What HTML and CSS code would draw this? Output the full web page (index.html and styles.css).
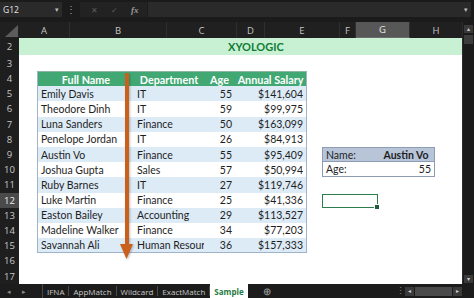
FILE: index.html
```html
<!DOCTYPE html>
<html lang="en">
  <head>
    <meta charset="UTF-8" />
    <title>XYOLOGIC - Sample</title>
    <link rel="stylesheet" href="styles.css">
  </head>
  <body>
    <div class="formula-bar">
      <div class="name-box"><span>G12</span><span class="caret">&#9662;</span></div>
      <div class="dots">&#8942;</div>
      <div class="fx-buttons">
        <span class="icon">&#10005;</span>
        <span class="icon">&#10003;</span>
        <span class="fx">fx</span>
      </div>
      <div class="formula-input"><span class="caret">&#9662;</span></div>
    </div>

    <div class="grid-area">
      <div class="sheet-col">
        <div class="col-headers">
          <div class="corner">
            <svg width="13" height="12" viewBox="0 0 13 12"><polygon points="13,0 13,12 0,12" fill="#5c5c5c" /></svg>
          </div>
          <div class="col w-a">A</div>
          <div class="col w-b">B</div>
          <div class="col w-c">C</div>
          <div class="col w-d">D</div>
          <div class="col w-e">E</div>
          <div class="col w-f">F</div>
          <div class="col w-g active">G</div>
          <div class="col w-h">H</div>
        </div>

        <div class="sheet">
          <div class="row row-2">
            <div class="rh">2</div>
            <div class="band">XYOLOGIC</div>
          </div>
          <div class="row row-3"><div class="rh">3</div></div>

          <div class="row">
            <div class="rh">4</div><div></div>
            <div class="th tl">Full Name</div>
            <div class="th">Department</div>
            <div class="th">Age</div>
            <div class="th tr">Annual Salary</div>
          </div>
          <div class="row">
            <div class="rh">5</div><div></div>
            <div class="td tl alt">Emily Davis</div>
            <div class="td alt">IT</div>
            <div class="td num alt">55</div>
            <div class="td num tr alt">$141,604</div>
          </div>
          <div class="row">
            <div class="rh">6</div><div></div>
            <div class="td tl">Theodore Dinh</div>
            <div class="td">IT</div>
            <div class="td num">59</div>
            <div class="td num tr">$99,975</div>
          </div>
          <div class="row">
            <div class="rh">7</div><div></div>
            <div class="td tl alt">Luna Sanders</div>
            <div class="td alt">Finance</div>
            <div class="td num alt">50</div>
            <div class="td num tr alt">$163,099</div>
          </div>
          <div class="row">
            <div class="rh">8</div><div></div>
            <div class="td tl">Penelope Jordan</div>
            <div class="td">IT</div>
            <div class="td num">26</div>
            <div class="td num tr">$84,913</div>
          </div>
          <div class="row">
            <div class="rh">9</div><div></div>
            <div class="td tl alt">Austin Vo</div>
            <div class="td alt">Finance</div>
            <div class="td num alt">55</div>
            <div class="td num tr alt">$95,409</div>
            <div></div>
            <div class="lk lk-head lk-left">Name:</div>
            <div class="lk lk-head lk-right lk-value">Austin Vo</div>
          </div>
          <div class="row">
            <div class="rh">10</div><div></div>
            <div class="td tl">Joshua Gupta</div>
            <div class="td">Sales</div>
            <div class="td num">57</div>
            <div class="td num tr">$50,994</div>
            <div></div>
            <div class="lk lk-left">Age:</div>
            <div class="lk lk-right num">55</div>
          </div>
          <div class="row">
            <div class="rh">11</div><div></div>
            <div class="td tl alt">Ruby Barnes</div>
            <div class="td alt">IT</div>
            <div class="td num alt">27</div>
            <div class="td num tr alt">$119,746</div>
          </div>
          <div class="row">
            <div class="rh current">12</div><div></div>
            <div class="td tl">Luke Martin</div>
            <div class="td">Finance</div>
            <div class="td num">25</div>
            <div class="td num tr">$41,336</div>
            <div></div>
            <div class="selected"><span class="handle"></span></div>
          </div>
          <div class="row">
            <div class="rh">13</div><div></div>
            <div class="td tl alt">Easton Bailey</div>
            <div class="td alt">Accounting</div>
            <div class="td num alt">29</div>
            <div class="td num tr alt">$113,527</div>
          </div>
          <div class="row">
            <div class="rh">14</div><div></div>
            <div class="td tl">Madeline Walker</div>
            <div class="td">Finance</div>
            <div class="td num">34</div>
            <div class="td num tr">$77,203</div>
          </div>
          <div class="row">
            <div class="rh">15</div><div></div>
            <div class="td tl alt last">Savannah Ali</div>
            <div class="td alt last clip">Human Resources</div>
            <div class="td num alt last">36</div>
            <div class="td num tr alt last">$157,333</div>
          </div>
          <div class="row"><div class="rh">16</div></div>
          <div class="row"><div class="rh">17</div></div>

          <div class="arrow">
            <div class="arrow-line"></div>
            <svg class="arrow-head" width="13" height="15" viewBox="0 0 13 15"><polygon points="0,0 13,0 6.5,15" fill="#c9601c" /></svg>
          </div>
        </div>
      </div>

      <div class="vscroll">
        <div class="sbtn">&#9652;</div>
        <div class="thumb"></div>
        <div class="track"></div>
        <div class="sbtn">&#9662;</div>
      </div>
    </div>

    <div class="tabs">
      <div class="nav">&#9666;</div>
      <div class="nav">&#9656;</div>
      <div class="tab-list">
        <div class="tab">IFNA</div>
        <div class="tab">AppMatch</div>
        <div class="tab">Wildcard</div>
        <div class="tab">ExactMatch</div>
        <div class="tab active">Sample</div>
      </div>
      <div class="add-sheet">&#8853;</div>
      <div class="spacer"></div>
      <div class="dots small">&#8942;</div>
      <div class="hscroll">
        <div class="hbtn">&#9666;</div>
        <div class="htrack"></div>
        <div class="hbtn">&#9656;</div>
      </div>
    </div>
  </body>
</html>
```

FILE: styles.css
```css
body {
  margin: 0;
  width: 474px;
  height: 298px;
  overflow: hidden;
  background-color: #1b1b1b;
  font-family: "Open Sans", "Noto Sans", sans-serif;
  color: #d0d0d0;
}

/* formula bar */
.formula-bar {
  height: 22px;
  display: flex;
  align-items: flex-start;
  padding-top: 2px;
  box-sizing: border-box;
}
.name-box {
  width: 62px;
  height: 15px;
  background-color: #2a2a2a;
  display: flex;
  align-items: center;
  justify-content: space-between;
  padding: 0 3px 0 3px;
  box-sizing: border-box;
  font-size: 8.5px;
  color: #e6e6e6;
}
.caret {
  font-size: 7px;
  color: #bdbdbd;
}
.dots {
  width: 18px;
  height: 15px;
  text-align: center;
  font-size: 10px;
  line-height: 15px;
  color: #a0a0a0;
}
.fx-buttons {
  width: 67px;
  height: 15px;
  background-color: #222222;
  display: flex;
  align-items: center;
  justify-content: space-around;
  padding: 0 2px 0 4px;
  box-sizing: border-box;
  font-size: 8px;
  color: #5e5e5e;
}
.fx-buttons .fx {
  font-family: "Liberation Serif", serif;
  font-style: italic;
  font-weight: bold;
  font-size: 9px;
  color: #9a9a9a;
}
.formula-input {
  flex: 1;
  height: 15px;
  margin: 0 3px 0 1px;
  background-color: #2a2a2a;
  display: flex;
  align-items: center;
  justify-content: flex-end;
  padding-right: 3px;
}

/* grid */
.grid-area {
  display: flex;
  height: 262px;
}
.sheet-col {
  flex: 1;
  display: flex;
  flex-direction: column;
}
.col-headers {
  height: 16px;
  display: flex;
  background-color: #202020;
  font-size: 9.5px;
  color: #c4c4c4;
}
.corner {
  width: 19px;
  display: flex;
  align-items: flex-end;
  justify-content: flex-end;
  padding: 0 1px 1px 0;
  box-sizing: border-box;
}
.col {
  display: flex;
  align-items: center;
  justify-content: center;
  border-right: 1px solid #2f2f2f;
  box-sizing: border-box;
}
.col.active {
  background-color: #575757;
  color: #e8e8e8;
  border-bottom: 1px solid #6d6d6d;
}
.w-a { width: 51px; }
.w-b { width: 97px; }
.w-c { width: 70px; }
.w-d { width: 28px; }
.w-e { width: 75px; }
.w-f { width: 16px; }
.w-g { width: 54px; }
.w-h { flex: 1; border-right: none; }

.sheet {
  flex: 1;
  position: relative;
  background-color: #ffffff;
  font-family: Lato, "Liberation Sans", sans-serif;
  font-size: 10.5px;
  color: #1e1e1e;
}
.row {
  display: grid;
  grid-template-columns: 19px 18px 97px 70px 31px 72px 15px 56px 57px 1fr;
  height: 15.2px;
}
.row-2 { height: 17px; }
.row-3 { height: 16px; }
.rh {
  background-color: #1e1e1e;
  color: #c8c8c8;
  font-family: "Open Sans", "Noto Sans", sans-serif;
  font-size: 9.5px;
  display: flex;
  align-items: center;
  justify-content: center;
}
.rh.current {
  background-color: #4a4a4a;
  color: #ececec;
}
.band {
  grid-column: 2 / -1;
  background-color: #c8f1d4;
  color: #107c36;
  font-weight: bold;
  font-size: 11px;
  display: flex;
  align-items: center;
  padding-left: 209px;
}

/* data table */
.th, .td {
  display: flex;
  align-items: center;
  padding: 0 3px;
  white-space: nowrap;
  overflow: hidden;
}
.th {
  background-color: #41a874;
  color: #ffffff;
  font-weight: bold;
  font-size: 10.8px;
  justify-content: center;
  border-top: 1px solid #8fb6a2;
}
.td.alt { background-color: #ddebf7; }
.td.num { justify-content: flex-end; }
.td.clip { text-overflow: clip; }
.tl { border-left: 1px solid #9fb3cb; }
.tr { border-right: 1px solid #9fb3cb; }
.last { border-bottom: 1px solid #9fb3cb; }

/* lookup box */
.lk {
  display: flex;
  align-items: center;
  padding: 0 3px;
  border-bottom: 1px solid #8e9db3;
}
.lk-head {
  background-color: #b8c5d9;
  border-top: 1px solid #8e9db3;
}
.lk-left { border-left: 1px solid #8e9db3; }
.lk-right { border-right: 1px solid #8e9db3; }
.lk-value {
  font-weight: bold;
  justify-content: center;
}
.lk.num { justify-content: flex-end; }

.selected {
  position: relative;
  border: 1px solid #2e7d4f;
  box-sizing: border-box;
  margin-top: 1px;
}
.handle {
  position: absolute;
  right: -3px;
  bottom: -3px;
  width: 4px;
  height: 4px;
  background-color: #1f5c39;
  border: 1px solid #ffffff;
}

/* orange arrow overlay */
.arrow {
  position: absolute;
  left: 120px;
  top: 35px;
  width: 13px;
  display: flex;
  flex-direction: column;
  align-items: center;
  filter: drop-shadow(1px 1px 1px rgba(0, 0, 0, 0.25));
}
.arrow-line {
  width: 4px;
  height: 171px;
  background-color: #c9601c;
}

/* scrollbars */
.vscroll {
  width: 12px;
  display: flex;
  flex-direction: column;
  align-items: center;
  padding: 3px 0 1px 0;
  box-sizing: border-box;
  background-color: #1b1b1b;
  border-left: 1px solid #2c2c2c;
}
.sbtn {
  width: 9px;
  height: 8px;
  background-color: #3a3a3a;
  color: #d0d0d0;
  font-size: 6px;
  line-height: 8px;
  text-align: center;
}
.thumb {
  width: 9px;
  height: 9px;
  margin-top: 2px;
  background-color: #3c3c3c;
}
.track { flex: 1; }

/* sheet tabs */
.tabs {
  height: 14px;
  display: flex;
  align-items: center;
  font-size: 8px;
  color: #c8c8c8;
  background-color: #1c1c1c;
}
.nav {
  width: 13px;
  text-align: center;
  font-size: 7px;
  color: #8a8a8a;
  margin-left: 2px;
}
.tab-list {
  display: flex;
  align-items: stretch;
  height: 14px;
  margin-left: 12px;
  border-left: 1px solid #4a4a4a;
}
.tab {
  display: flex;
  align-items: center;
  padding: 0 4px;
  border-right: 1px solid #4a4a4a;
  margin: 2px 0;
}
.tab.active {
  background-color: #ffffff;
  color: #1d7a3f;
  font-weight: bold;
  border-right: none;
  margin: 0;
  padding: 0 4px;
}
.add-sheet {
  margin-left: 15px;
  font-size: 10px;
  color: #a8a8a8;
}
.spacer { flex: 1; }
.dots.small {
  width: 10px;
  height: 14px;
  line-height: 14px;
  font-size: 9px;
  color: #8a8a8a;
}
.hscroll {
  width: 57px;
  height: 9px;
  display: flex;
  margin-right: 12px;
  gap: 1px;
}
.hbtn {
  width: 9px;
  background-color: #3a3a3a;
  color: #cfcfcf;
  font-size: 6px;
  line-height: 9px;
  text-align: center;
}
.htrack {
  flex: 1;
  background-color: #4a4a4a;
}
```
